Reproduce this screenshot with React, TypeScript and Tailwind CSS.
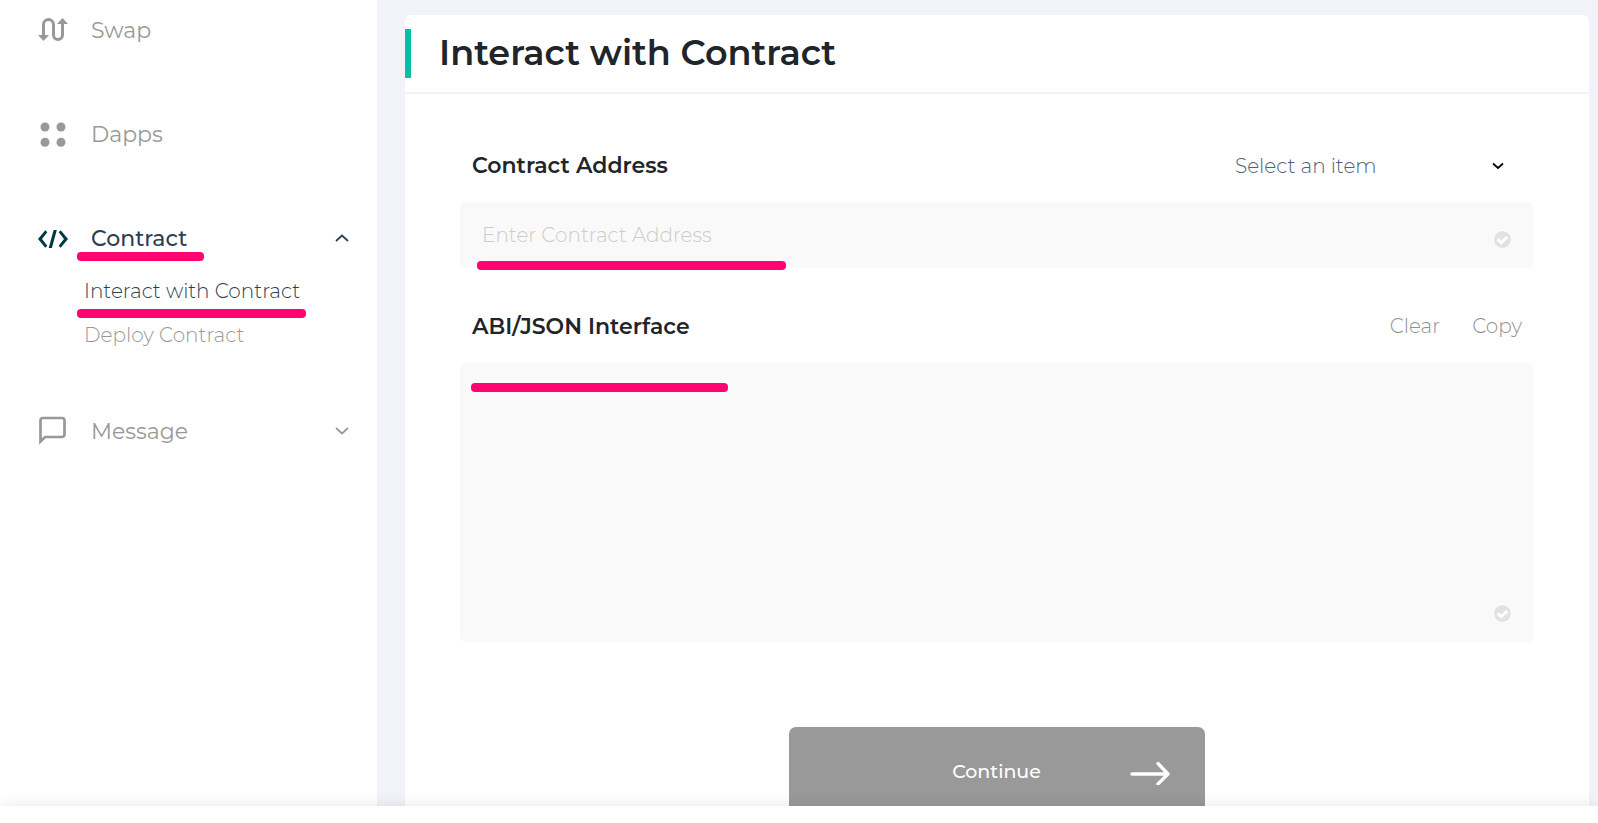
import type { ReactNode } from "react";

function SwapIcon() {
  return (
    <svg width="30" height="24" viewBox="0 0 30 24" fill="none" aria-hidden="true">
      <path d="M5.500 17V6.500a5 5 0 0 1 10 0V17a4.500 4.500 0 0 0 9 0V6" stroke="currentColor" strokeWidth="3" />
      <path d="M0 17h11l-5.500 6zM19 6h11l-5.500-6z" fill="currentColor" />
    </svg>
  );
}

function DappsIcon() {
  return (
    <svg width="30" height="26" viewBox="0 0 30 26" fill="currentColor" aria-hidden="true">
      <circle cx="7" cy="6" r="4.500" />
      <circle cx="23" cy="6" r="4.500" />
      <circle cx="7" cy="21.300" r="4.500" />
      <circle cx="23" cy="21.300" r="4.500" />
    </svg>
  );
}

function CodeIcon() {
  return (
    <svg width="30" height="22" viewBox="0 -2 30 22" fill="#003945" aria-hidden="true">
      <path d="M7.300 1.200 9.300 3.300 4 10l5.300 6.700-2 2.100L0 10zM22.700 1.200 20.700 3.300 26 10l-5.300 6.700 2 2.100L30 10zM15.600 1h3.200L13.900 19h-3.200z" />
    </svg>
  );
}

function MessageIcon() {
  return (
    <svg width="30" height="30" viewBox="0 0 30 30" fill="none" aria-hidden="true">
      <path
        d="M2.500 25.500V4.500a2.500 2.500 0 0 1 2.500-2.500h19A2.500 2.500 0 0 1 26.500 4.500v14a2.500 2.500 0 0 1-2.500 2.500H7z"
        stroke="currentColor"
        strokeWidth="2.700"
      />
    </svg>
  );
}

function Chevron({ up = false, bold = false }: { up?: boolean; bold?: boolean }) {
  return (
    <svg width="14" height="8" viewBox="0 0 14 8" fill="none" aria-hidden="true">
      <path
        d={up ? "M1 7l6-5.500L13 7" : bold ? "M2 1.500l5 4.500 5-4.500" : "M1 1l6 5.500L13 1"}
        stroke="currentColor"
        strokeWidth="1.700"
      />
    </svg>
  );
}

function CheckBadge() {
  return (
    <svg width="19" height="19" viewBox="0 0 19 19" fill="none" aria-hidden="true">
      <circle cx="9.500" cy="9.500" r="9" fill="#e2e2e2" stroke="#fff" />
      <path d="M4.700 9.300l3.500 3.500L14.200 7" stroke="#fff" strokeWidth="2.900" />
    </svg>
  );
}

function NavRow({ icon, label, active, chevron }: { icon: ReactNode; label: ReactNode; active?: boolean; chevron?: ReactNode }) {
  return (
    <a href="#" className={`flex h-10 items-center pr-7 pl-[38px] text-[22px] ${active ? "font-medium text-[#2c3e50]" : "text-[#999]"}`}>
      <span className="flex w-[30px] justify-center">{icon}</span>
      <span className="relative ml-[23px]">{label}</span>
      <span className="ml-auto">{chevron}</span>
    </a>
  );
}

const marker = "pointer-events-none absolute h-[9px] rounded-[4px] bg-[#ff0572]";

export default function App() {
  return (
    <div className="flex h-screen flex-col overflow-hidden bg-white font-[Montserrat,Inter,sans-serif] text-[#212529]">
      <div className="flex min-h-0 flex-1 overflow-hidden">
        <nav className="flex w-[377px] shrink-0 flex-col gap-16 pt-[10px]">
          <NavRow icon={<SwapIcon />} label="Swap" />
          <NavRow icon={<DappsIcon />} label="Dapps" />
          <div>
            <NavRow
              active
              icon={<CodeIcon />}
              label={<>Contract<span className={`${marker} top-[30px] -left-[14px] w-[127px]`} /></>}
              chevron={<Chevron up />}
            />
            <div className="mt-[21px] flex flex-col items-start gap-5 pl-[84px] text-[20px] leading-6 font-light">
              <a href="#" className="relative text-[#2c3e50]">
                Interact with Contract
                <span className={`${marker} top-[30px] -left-[7px] w-[229px]`} />
              </a>
              <a href="#" className="text-[#999]">Deploy Contract</a>
            </div>
          </div>
          <NavRow icon={<MessageIcon />} label="Message" chevron={<Chevron />} />
        </nav>

        <main className="min-w-0 flex-1 bg-[#f2f3f9] pt-[15px] pr-[9px] pl-7">
          <section className="min-h-full rounded-t-md bg-white">
            <header className="border-b-2 border-[#f2f3f9] py-[14px]">
              <h1 className="flex h-[49px] items-center border-l-6 border-[#05c0a5] pl-7 text-[35px] font-semibold">
                Interact with Contract
              </h1>
            </header>

            <form className="flex flex-col pt-12 pr-14 pl-[55px]" onSubmit={(e) => e.preventDefault()}>
              <div className="flex h-[46px] items-center justify-between pr-7 pl-3">
                <label htmlFor="address" className="text-[22px] font-semibold">Contract Address</label>
                <div className="relative flex w-[270px] items-center pt-[2px]">
                  <select aria-label="Contract" className="w-full appearance-none bg-transparent text-[20px] font-light text-[#506078]">
                    <option>Select an item</option>
                  </select>
                  <span className="pointer-events-none absolute right-0 text-black"><Chevron bold /></span>
                </div>
              </div>
              <div className="relative mt-[14px] flex h-[66px] rounded-[5px] bg-[#f9f9f9]">
                <input
                  id="address"
                  type="text"
                  placeholder="Enter Contract Address"
                  className="w-full bg-transparent px-[22px] text-[20px] font-light outline-none placeholder:text-[#ccc]"
                />
                <span className="absolute right-[21px] bottom-[19px]"><CheckBadge /></span>
                <span className={`${marker} -bottom-[2px] left-[17px] w-[309px]`} />
              </div>

              <div className="mt-[35px] flex h-[46px] items-center pr-[11px] pl-3">
                <label htmlFor="abi" className="mr-auto text-[22px] font-semibold">ABI/JSON Interface</label>
                <div className="flex gap-8 text-[20px] font-light text-[#909090]">
                  <button type="button">Clear</button>
                  <button type="button">Copy</button>
                </div>
              </div>
              <div className="relative mt-[14px] flex h-[279px] rounded-[5px] bg-[#f9f9f9]">
                <textarea id="abi" className="w-full resize-none bg-transparent px-[22px] py-5 text-[20px] outline-none" />
                <span className="absolute right-[21px] bottom-[19px]"><CheckBadge /></span>
                <span className={`${marker} top-5 left-[11px] w-[257px]`} />
              </div>

              <button
                type="submit"
                className="relative mt-[85px] flex h-[90px] w-[416px] items-center justify-center self-center rounded-[7px] bg-[#999] text-[19px] font-medium text-white"
              >
                Continue
                <svg className="absolute right-[34px]" width="42" height="26" viewBox="0 0 42 26" fill="none" stroke="currentColor" strokeWidth="3.300" strokeLinecap="round" strokeLinejoin="round" aria-hidden="true">
                  <path d="M3 15h36M29 4.500l10 10.500-10 10" />
                </svg>
              </button>
            </form>
          </section>
        </main>
      </div>
      <footer className="relative h-[17px] shrink-0 bg-white shadow-[0_0_16px_rgba(0,0,0,0.1)]" />
    </div>
  );
}
